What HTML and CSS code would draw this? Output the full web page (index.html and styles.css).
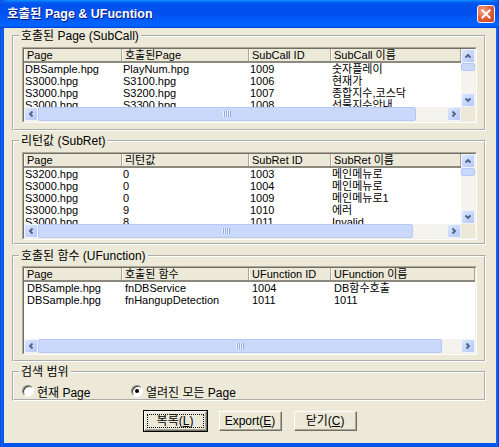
FILE: index.html
```html
<!DOCTYPE html>
<html lang="ko">
<head>
<meta charset="utf-8">
<title>호출된 Page &amp; UFucntion</title>
<link rel="stylesheet" href="styles.css">
</head>
<body>
<div class="window">
  <div class="titlebar">
    <span class="title">호출된 Page &amp; UFucntion</span>
    <span class="close"><svg viewBox="0 0 18 18"><path d="M5 5 L13 13 M13 5 L5 13"/></svg></span>
  </div>
  <div class="client">
    <fieldset class="group g1">
      <legend>호출된 Page (SubCall)</legend>
      <div class="list l1">
        <div class="list-body">
          <div class="view">
            <div class="row head"><span>Page</span><span>호출된Page</span><span>SubCall ID</span><span>SubCall 이름</span></div>
            <div class="row"><span>DBSample.hpg</span><span>PlayNum.hpg</span><span>1009</span><span>숫자플레이</span></div>
            <div class="row"><span>S3000.hpg</span><span>S3100.hpg</span><span>1006</span><span>현재가</span></div>
            <div class="row"><span>S3000.hpg</span><span>S3200.hpg</span><span>1007</span><span>종합지수,코스닥</span></div>
            <div class="row"><span>S3000.hpg</span><span>S3300.hpg</span><span>1008</span><span>선물지수안내</span></div>
          </div>
          <div class="vscroll">
            <span class="arrow"><svg viewBox="0 0 12 12"><path d="M3.5 7.5 L6 5 L8.5 7.5"/></svg></span>
            <span class="thumb"></span>
            <span class="track"></span>
            <span class="arrow"><svg viewBox="0 0 12 12"><path d="M3.5 4.5 L6 7 L8.5 4.5"/></svg></span>
          </div>
          <div class="hscroll">
            <span class="arrow"><svg viewBox="0 0 12 12"><path d="M7.5 3.5 L5 6 L7.5 8.5"/></svg></span>
            <span class="thumb"></span>
            <span class="track"></span>
            <span class="arrow"><svg viewBox="0 0 12 12"><path d="M4.5 3.5 L7 6 L4.5 8.5"/></svg></span>
          </div>
          <div class="corner"></div>
        </div>
      </div>
    </fieldset>

    <fieldset class="group g2">
      <legend>리턴값 (SubRet)</legend>
      <div class="list l2">
        <div class="list-body">
          <div class="view">
            <div class="row head"><span>Page</span><span>리턴값</span><span>SubRet ID</span><span>SubRet 이름</span></div>
            <div class="row"><span>S3200.hpg</span><span>0</span><span>1003</span><span>메인메뉴로</span></div>
            <div class="row"><span>S3000.hpg</span><span>0</span><span>1004</span><span>메인메뉴로</span></div>
            <div class="row"><span>S3000.hpg</span><span>0</span><span>1009</span><span>메인메뉴로1</span></div>
            <div class="row"><span>S3000.hpg</span><span>9</span><span>1010</span><span>에러</span></div>
            <div class="row"><span>S3000.hpg</span><span>8</span><span>1011</span><span>Invalid</span></div>
          </div>
          <div class="vscroll">
            <span class="arrow"><svg viewBox="0 0 12 12"><path d="M3.5 7.5 L6 5 L8.5 7.5"/></svg></span>
            <span class="thumb"></span>
            <span class="track"></span>
            <span class="arrow"><svg viewBox="0 0 12 12"><path d="M3.5 4.5 L6 7 L8.5 4.5"/></svg></span>
          </div>
          <div class="hscroll">
            <span class="arrow"><svg viewBox="0 0 12 12"><path d="M7.5 3.5 L5 6 L7.5 8.5"/></svg></span>
            <span class="thumb"></span>
            <span class="track"></span>
            <span class="arrow"><svg viewBox="0 0 12 12"><path d="M4.5 3.5 L7 6 L4.5 8.5"/></svg></span>
          </div>
          <div class="corner"></div>
        </div>
      </div>
    </fieldset>

    <fieldset class="group g3">
      <legend>호출된 함수 (UFunction)</legend>
      <div class="list l3">
        <div class="list-body no-v">
          <div class="view">
            <div class="row head"><span>Page</span><span>호출된 함수</span><span>UFunction ID</span><span>UFunction 이름</span></div>
            <div class="row"><span>DBSample.hpg</span><span>fnDBService</span><span>1004</span><span>DB함수호출</span></div>
            <div class="row"><span>DBSample.hpg</span><span>fnHangupDetection</span><span>1011</span><span>1011</span></div>
          </div>
          <div class="hscroll">
            <span class="arrow"><svg viewBox="0 0 12 12"><path d="M7.5 3.5 L5 6 L7.5 8.5"/></svg></span>
            <span class="thumb"></span>
            <span class="track"></span>
            <span class="arrow"><svg viewBox="0 0 12 12"><path d="M4.5 3.5 L7 6 L4.5 8.5"/></svg></span>
          </div>
        </div>
      </div>
    </fieldset>

    <fieldset class="group g4">
      <legend>검색 범위</legend>
      <div class="radios">
        <label class="radio-item"><span class="radio"></span>현재 Page</label>
        <label class="radio-item"><span class="radio checked"></span>열려진 모든 Page</label>
      </div>
    </fieldset>

    <div class="buttons">
      <button class="btn default"><span class="focus">복록(<u>L</u>)</span></button>
      <button class="btn">Export(<u>E</u>)</button>
      <button class="btn">닫기(<u>C</u>)</button>
    </div>
  </div>
</div>
</body>
</html>
```

FILE: styles.css
```css
* { box-sizing: border-box; }
html, body { margin: 0; padding: 0; }
body {
  width: 499px;
  height: 447px;
  overflow: hidden;
  background: #0054e3;
  font-family: "Liberation Sans", "Noto Sans CJK KR", sans-serif;
  font-size: 12px;
  color: #000;
}
.window {
  width: 499px;
  height: 447px;
  display: flex;
  flex-direction: column;
  background: linear-gradient(to right, #0831d9 0, #166aee 1px, #0055ea 3px, #0055ea 495px, #166aee 497px, #0831d9 499px);
}
.titlebar {
  height: 28px;
  flex: none;
  display: flex;
  align-items: center;
  justify-content: space-between;
  padding: 0 4px 0 7px;
  border-radius: 7px 7px 0 0;
  background: linear-gradient(to bottom, #0997ff 0%, #0a6af5 6%, #0053ee 14%, #0050ee 45%, #0060fb 80%, #0066ff 90%, #0055f0 96%, #003dd7 100%);
}
.title {
  font-weight: bold;
  font-size: 12.5px;
  color: #fff;
  text-shadow: 1px 1px 0 #0a1883;
  line-height: 16px;
}
.close {
  width: 18px;
  height: 18px;
  border: 1px solid #fff;
  border-radius: 3px;
  background: radial-gradient(circle at 30% 30%, #f5a58b 0%, #e4653f 45%, #c9381b 100%);
  display: flex;
}
.close svg { width: 16px; height: 16px; }
.close path { stroke: #fff; stroke-width: 2.2; fill: none; stroke-linecap: square; }

.client {
  flex: 1;
  margin: 0 3px 4px 4px;
  background: #ece9d8;
  display: flex;
  flex-direction: column;
}

.group {
  margin: 0 10px 0 8px;
  padding: 4px 7px 6px 8px;
  border: 2px groove #fff;
  min-width: 0;
}
.group legend {
  padding: 0 2px;
  margin-left: -3px;
  line-height: 14px;
  font-size: 12px;
}
.g1 { margin-top: 1px; }
.g2 { margin-top: 3px; padding-bottom: 3px; }
.g3 { margin-top: 4px; padding-top: 3px; padding-bottom: 5px; }
.g4 { margin-top: 3px; padding-top: 5px; padding-bottom: 1px; }

.list {
  border: 1px solid;
  border-color: #aca899 #fff #fff #aca899;
}
.l1 { height: 76px; }
.l2 { height: 88px; }
.l3 { height: 89px; }
.list-body {
  height: 100%;
  border: 1px solid;
  border-color: #716f64 #f1efe2 #f1efe2 #716f64;
  background: #fff;
  display: grid;
  grid-template-columns: 1fr 14px;
  grid-template-rows: 1fr 14px;
}
.list-body.no-v { grid-template-columns: 1fr; }
.view { overflow: hidden; min-width: 0; min-height: 0; }

.row {
  display: grid;
  grid-template-columns: 98px 127px 82px 1fr;
  height: 12px;
  font-size: 11px;
  line-height: 12px;
  white-space: nowrap;
}
.row span { padding-left: 1px; }
.row.head {
  height: 14px;
  line-height: 12px;
  background: #ece9d8;
  border-bottom: 2px solid #8c8a7e;
}
.row.head span {
  padding-left: 3px;
  border-right: 1px solid #aca899;
  box-shadow: inset 1px 0 0 #fff;
}
.l3 .row span { padding-left: 3px; }

.vscroll {
  display: flex;
  flex-direction: column;
  background: #f4f3ee;
}
.hscroll {
  display: flex;
  background: #f4f3ee;
}
.corner { background: #ece9d8; }
.arrow {
  flex: none;
  width: 14px;
  height: 14px;
  border: 1px solid #f0f4ff;
  border-radius: 2px;
  background: linear-gradient(135deg, #dde7fe 0%, #c4d4fb 60%, #b3c8f7 100%);
  display: flex;
  align-items: center;
  justify-content: center;
}
.arrow svg { width: 12px; height: 12px; }
.arrow path { stroke: #4d6185; stroke-width: 1.8; fill: none; }
.thumb {
  flex: none;
  border: 1px solid #b6c8f4;
  border-radius: 2px;
  background: #c9d8fb;
  position: relative;
}
.hscroll .thumb::after {
  content: "";
  position: absolute;
  left: 50%;
  top: 3px;
  width: 8px;
  height: 6px;
  margin-left: -4px;
  background: repeating-linear-gradient(to right, #eef4fe 0, #eef4fe 1px, #8caae6 1px, #8caae6 2px);
}
.track { flex: 1; }
.vscroll .thumb { height: 8px; }
.l1 .hscroll .thumb { width: 378px; }
.l2 .hscroll .thumb { width: 375px; }
.l3 .hscroll .thumb { width: 404px; }

.radios {
  display: flex;
  height: 14px;
  align-items: center;
}
.radio-item {
  display: flex;
  align-items: center;
  gap: 3px;
}
.radio-item:first-child { width: 109px; }
.radio {
  width: 12px;
  height: 12px;
  border-radius: 50%;
  background: #fff;
  border: 1px solid;
  border-color: #8a877a #fff #fff #8a877a;
  box-shadow: inset 1px 1px 0 #404040;
  position: relative;
}
.radio.checked::after {
  content: "";
  position: absolute;
  left: 3px;
  top: 3px;
  width: 4px;
  height: 4px;
  border-radius: 50%;
  background: #000;
}

.buttons {
  display: flex;
  justify-content: center;
  gap: 12px;
  margin-top: 10px;
}
.btn {
  width: 63px;
  height: 20px;
  padding: 0;
  font-family: "Liberation Sans", "Noto Sans CJK KR", sans-serif;
  font-size: 12px;
  line-height: 14px;
  color: #000;
  background: #ece9d8;
  border: 1px solid;
  border-color: #fff #716f64 #716f64 #fff;
  box-shadow: inset -1px -1px 0 #aca899;
}
.btn.default {
  outline: 1px solid #000;
  padding: 2px;
}
.btn .focus {
  display: block;
  height: 100%;
  border: 1px dotted #000;
  line-height: 12px;
}
```
